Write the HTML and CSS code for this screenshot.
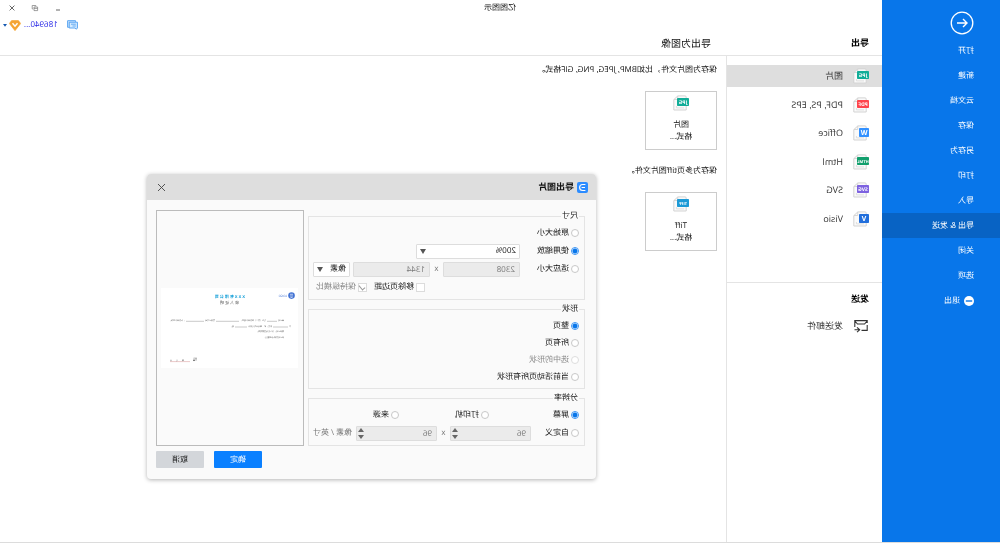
FILE: index.html
```html
<!DOCTYPE html>
<html lang="zh-CN">
<head>
<meta charset="utf-8">
<title>亿图图示</title>
<link rel="stylesheet" href="styles.css">
</head>
<body>
<svg class="defs" aria-hidden="true">
  <symbol id="sheet" viewBox="0 0 16 16">
    <path d="M4 .9H11.2L15.2 4.6V15H2.8V2.1Q2.8 .9 4 .9Z" fill="#fafafa" stroke="#d3d3d3"/>
    <path d="M11.3 1V4.5H15.1" fill="none" stroke="#d3d3d3" stroke-width=".9"/>
    <path d="M5 12.9H12.6V11" fill="none" stroke="#dedede"/>
  </symbol>
</svg>
<div class="page">
  <nav class="sidebar" aria-label="文件">
    <button class="back" aria-label="返回"><svg viewBox="0 0 24 24"><circle cx="12" cy="12" r="10.8" fill="none" stroke="#fff" stroke-width="1.3"/><path d="M17 12H7.5M11 8L7 12L11 16" fill="none" stroke="#fff" stroke-width="1.4"/></svg></button>
    <a href="#">打开</a>
    <a href="#">新建</a>
    <a href="#">云文档</a>
    <a href="#">保存</a>
    <a href="#">另存为</a>
    <a href="#">打印</a>
    <a href="#">导入</a>
    <a href="#" class="current">导出 &amp; 发送</a>
    <a href="#">关闭</a>
    <a href="#">选项</a>
    <a href="#"><svg class="exit" viewBox="0 0 10 10"><circle cx="5" cy="5" r="5" fill="#fff"/><path d="M1.8 5H8.2" stroke="#0876ea" stroke-width="1.4"/></svg>退出</a>
  </nav>

  <div class="main">
    <header class="titlebar">
      <span class="app-name">亿图图示</span>
      <div class="controls">
        <button aria-label="最小化"><svg viewBox="0 0 8 8"><path d="M2 6H6" stroke="#666" fill="none"/></svg></button>
        <button aria-label="还原"><svg viewBox="0 0 8 8"><path d="M3.2 2.5V1.5H6.8V4.9H5.9M1.4 3H5V6.6H1.4ZM1.4 4.4H5" stroke="#777" stroke-width=".7" fill="none"/></svg></button>
        <button aria-label="关闭"><svg viewBox="0 0 8 8"><path d="M1.6 1.6L6.4 6.4M6.4 1.6L1.6 6.4" stroke="#555" stroke-width=".9" fill="none"/></svg></button>
      </div>
    </header>
    <div class="userbar">
      <button aria-label="消息"><svg class="chat" viewBox="0 0 11 10"><path d="M2.5 1.8V.7H10.4V7.3H9.2M.6 2.2H8.8V8H3L1.6 9.2L.6 8Z" fill="#d5ebff" stroke="#4a9cf0" stroke-width=".9"/><path d="M2.2 4.2H7M2.2 6H5.5" stroke="#4a9cf0" stroke-width=".8"/></svg></button>
      <a href="#" class="account">186940...</a>
      <svg class="gem" viewBox="0 0 12 11"><path d="M2.6 .5H9.4L11.7 3.5L6 10.7L.3 3.5Z" fill="#f5a432" stroke="#f5a432" stroke-width=".6" stroke-linejoin="round"/><path d="M3.5 3.3L6 6.2L8.5 3.3" fill="none" stroke="#fff" stroke-width="1.4"/></svg>
      <svg class="caret" viewBox="0 0 4 3"><path d="M0 0H4L2 2.8Z" fill="#1558b0"/></svg>
    </div>
    <div class="headings">
      <h1>导出</h1>
      <h2>导出为图像</h2>
    </div>

    <div class="columns">
      <div class="types">
        <section class="export">
          <a href="#" class="type selected"><svg viewBox="0 0 16 16"><use href="#sheet"/><rect y="3" width="12" height="8" rx=".8" fill="#12ad98"/><text x="6" y="8.8">JPG</text></svg>图片</a>
          <a href="#" class="type"><svg viewBox="0 0 16 16"><use href="#sheet"/><rect y="3" width="12" height="8" rx=".8" fill="#ff444c"/><text x="6" y="8.8">PDF</text></svg>PDF, PS, EPS</a>
          <a href="#" class="type"><svg viewBox="0 0 16 16"><use href="#sheet"/><rect y="3" width="10" height="9" rx=".8" fill="#3391ff"/><text class="letter" x="5" y="9.6">W</text></svg>Office</a>
          <a href="#" class="type"><svg viewBox="0 0 16 16"><use href="#sheet"/><rect y="3" width="12" height="8" rx=".8" fill="#129f6d"/><text class="long" x="6" y="8.6">HTML</text></svg>Html</a>
          <a href="#" class="type"><svg viewBox="0 0 16 16"><use href="#sheet"/><rect y="3" width="12" height="8" rx=".8" fill="#7d62e0"/><text x="6" y="8.8">SVG</text></svg>SVG</a>
          <a href="#" class="type"><svg viewBox="0 0 16 16"><use href="#sheet"/><rect y="3" width="10" height="9" rx=".8" fill="#226fdc"/><text class="letter" x="5" y="9.6">V</text></svg>Visio</a>
        </section>
        <section class="send">
          <h2>发送</h2>
          <a href="#" class="type"><svg viewBox="0 0 16 16"><path d="M1.8 7V12.4H7.5M1.8 5V2.6H14.2V9M1.8 3L4.5 6H11.5L14.2 3M9 11.8H14.5M12 9.3L9.3 11.8L12 14.2" fill="none" stroke="#333" stroke-width="1.1"/></svg>发送邮件</a>
        </section>
      </div>

      <main class="content">
        <p>保存为图片文件，比如BMP, JPEG, PNG, GIF格式。</p>
        <button class="card"><svg viewBox="0 0 16 16"><use href="#sheet"/><rect y="3" width="12" height="8" rx=".8" fill="#12ad98"/><text x="6" y="8.8">JPG</text></svg><span>图片<br>格式...</span></button>
        <p>保存为多页tiff图片文件。</p>
        <button class="card"><svg viewBox="0 0 16 16"><use href="#sheet"/><rect y="3" width="12" height="8" rx=".8" fill="#1d9ad6"/><text class="long" x="6" y="8.6">TIFF</text></svg><span>Tiff<br>格式...</span></button>
      </main>
    </div>
  </div>

  <form class="dialog" role="dialog" aria-labelledby="dialog-title">
    <div class="dialog-head">
      <svg class="logo" viewBox="0 0 11 11"><rect width="11" height="11" rx="2" fill="#2c8cff"/><path d="M2.6 2.5H5.4A3 3 0 0 1 5.4 8.5H2.6M3 5.5H6.4" fill="none" stroke="#fff" stroke-width="1.1"/></svg>
      <h2 id="dialog-title">导出图片</h2>
      <button type="button" class="close" aria-label="关闭"><svg viewBox="0 0 9 9"><path d="M1 1L8 8M8 1L1 8" stroke="#444" stroke-width=".9"/></svg></button>
    </div>
    <div class="dialog-body">
      <div class="settings">
        <fieldset>
          <legend>尺寸</legend>
          <div class="rows">
            <div class="row"><label class="opt"><input type="radio" name="size">原始大小</label></div>
            <div class="row"><label class="opt size-opt"><input type="radio" name="size" checked>使用缩放</label>
              <span class="pick zoom"><select aria-label="缩放"><option>200%</option></select></span></div>
            <div class="row"><label class="opt size-opt"><input type="radio" name="size">适应大小</label>
              <input class="box" type="text" value="2308" aria-label="宽度" disabled><span class="times">x</span><input class="box" type="text" value="1344" aria-label="高度" disabled>
              <span class="pick unit"><select aria-label="单位"><option>像素</option></select></span></div>
            <div class="row checks"><label class="opt"><input type="checkbox">移除页边距</label><label class="opt off"><input type="checkbox" checked disabled>保持纵横比</label></div>
          </div>
        </fieldset>
        <fieldset class="shape">
          <legend>形状</legend>
          <div class="rows">
            <div class="row"><label class="opt"><input type="radio" name="shape" checked>整页</label></div>
            <div class="row"><label class="opt"><input type="radio" name="shape">所有页</label></div>
            <div class="row"><label class="opt off"><input type="radio" name="shape" disabled>选中的形状</label></div>
            <div class="row"><label class="opt"><input type="radio" name="shape">当前活动页所有形状</label></div>
          </div>
        </fieldset>
        <fieldset>
          <legend>分辨率</legend>
          <div class="rows">
            <div class="row"><label class="opt third"><input type="radio" name="dpi" checked>屏幕</label><label class="opt third"><input type="radio" name="dpi">打印机</label><label class="opt"><input type="radio" name="dpi">来源</label></div>
            <div class="row"><label class="opt dpi-opt"><input type="radio" name="dpi">自定义</label>
              <span class="spin"><input class="box" type="text" value="96" aria-label="水平分辨率" disabled></span><span class="times">x</span><span class="spin"><input class="box" type="text" value="96" aria-label="垂直分辨率" disabled></span><span class="per">像素 / 英寸</span></div>
          </div>
        </fieldset>
      </div>
      <div class="side">
        <div class="preview">
          <svg viewBox="0 0 137 80" role="img" aria-label="预览">
            <rect width="137" height="80" fill="#fff"/>
            <circle cx="6.5" cy="7.6" r="3.3" fill="#4474d4"/><path d="M5 6.3H8M5 8H8M5.5 9.5H7.5" stroke="#fff" stroke-width=".6"/>
            <text class="brand" x="11" y="9">LOGO</text>
            <text class="company" x="53" y="9.5">X X X 有 限 公 司</text>
            <text class="subject" x="59" y="15.5">收 入 证 明</text>
            <text x="14" y="33">兹证明</text><text x="32" y="33">先生（女士）系我单位员工，</text><text x="83" y="33">身份证号码</text><text x="113" y="33">，在我单位工作。</text>
            <path d="M21 33.3H31M59 33.3H82M94 33.3H112" stroke="#777" stroke-width=".4"/>
            <text x="7" y="38.7">任</text><text x="26" y="38.7">职务，近一年内平均月收入</text><text x="64" y="38.7">元。</text>
            <path d="M10 39H25M51 39H63" stroke="#777" stroke-width=".4"/>
            <text x="14" y="44.4">特此证明，以上情况真实有效。</text>
            <text x="14" y="50">此证明仅限 办理使用。</text>
            <text x="101" y="70.5">单位</text><text x="101" y="73.2">盖章</text>
            <path d="M108 73.6H128" stroke="#c77" stroke-width=".4"/><text x="114" y="73.2">年</text><text x="120" y="73.2">月</text><text x="126" y="73.2">日</text>
          </svg>
        </div>
        <div class="actions"><button type="submit" class="primary">确定</button><button type="button">取消</button></div>
      </div>
    </div>
  </form>
</div>
</body>
</html>
```
FILE: styles.css
```css
* { box-sizing: border-box; }
body {
  margin: 0;
  background: #fff;
  color: #111;
  font: 8px/12px "Open Sans", "Noto Sans CJK SC", sans-serif;
  text-rendering: geometricPrecision;
}
h1, h2, p { margin: 0; font-size: inherit; }
a { color: inherit; text-decoration: none; }
button { padding: 0; border: 0; background: none; color: inherit; font: inherit; }
button, input, select { text-rendering: inherit; }
svg { display: block; flex: none; }
.defs { position: absolute; width: 0; height: 0; }

/* The whole window is shown mirrored. */
.page {
  position: relative;
  display: flex;
  min-height: 100vh;
  border-bottom: 1px solid #dcdcdc;
  transform: scaleX(-1);
}

.sidebar { width: 118px; flex: none; background: #0876ea; color: #fff; padding-top: 11px; }
.sidebar a { display: flex; align-items: center; gap: 4px; height: 25px; padding-left: 26px; }
.sidebar .current { background: #0863c4; }
.back { display: block; margin: 0 0 3px 26px; }
.back svg { width: 24px; height: 24px; }
.exit { width: 10px; height: 10px; }

.main { flex: 1; min-width: 0; display: flex; flex-direction: column; }
.titlebar { display: grid; grid-template-columns: 1fr auto 1fr 118px; align-items: center; height: 16px; }
.app-name { grid-column: 2; }
.controls { grid-column: 3 / 5; display: flex; justify-content: flex-end; gap: 15px; padding-right: 8px; }
.controls svg { width: 8px; height: 8px; }
.userbar { display: flex; justify-content: flex-end; align-items: center; height: 18px; padding-right: 3px; }
.chat { width: 11px; height: 10px; }
.account { margin: 0 3px 0 9px; color: #2323e6; }
.gem { width: 12px; height: 11px; margin-right: 2px; }
.caret { width: 4px; height: 3px; }
.headings { display: flex; align-items: center; height: 22px; padding: 0 0 4px 13px; border-bottom: 1px solid #e4e4e4; }
.headings h1 { width: 158px; font-size: 9px; color: #000; }
.headings h2 { font-size: 10px; font-weight: 400; }

.columns { flex: 1; display: flex; }
.types { width: 156px; flex: none; border-right: 1px solid #e4e4e4; font-size: 9px; color: #333; }
.export {
  display: flex;
  flex-direction: column;
  justify-content: space-between;
  height: 227px;
  padding: 9px 0 52px;
  border-bottom: 1px solid #e4e4e4;
}
.type { display: flex; align-items: center; gap: 10px; height: 22px; padding-left: 13px; }
.type svg, .card svg { width: 16px; height: 16px; }
.type text, .card text { fill: #fff; font-size: 5px; font-weight: 700; text-anchor: middle; }
.type .letter { font-size: 7px; }
.type .long, .card .long { font-size: 4px; }
.selected { background: #dedede; }
.send { padding-top: 10px; }
.send h2 { margin: 0 0 10px 13px; color: #000; }

.content { flex: 1; padding: 8px 9px; }
.card {
  display: flex;
  flex-direction: column;
  align-items: center;
  gap: 8px;
  width: 72px;
  height: 59px;
  margin: 15px 0;
  padding-top: 3px;
  border: 1px solid #ccc;
}

.dialog {
  position: absolute;
  left: 404px;
  top: 174px;
  width: 449px;
  border-radius: 4px;
  background: #fafafa;
  box-shadow: 0 1px 4px rgba(0, 0, 0, .3);
}
.dialog-head { display: flex; align-items: center; gap: 3px; height: 26px; padding: 0 10px 0 8px; background: #dedede; border-radius: 4px 4px 0 0; }
.logo { width: 11px; height: 11px; }
.dialog-head h2 { font-size: 9px; }
.close { margin-left: auto; }
.close svg { width: 9px; height: 9px; }
.dialog-body { display: flex; gap: 4px; padding: 10px 9px 11px 11px; }
.settings { flex: 1; display: flex; flex-direction: column; gap: 4px; padding-top: 1px; }
fieldset { min-width: 0; margin: 0; padding: 4px 4px 4px 5px; border: 1px solid #e4e4e4; }
legend { padding: 0 1px; line-height: 10px; }
.rows { display: grid; gap: 2px; }
.row { display: flex; align-items: center; height: 16px; }
.shape { padding: 3px 4px 3px 5px; }
.shape .rows { gap: 0; }
.shape .row { height: 17px; }
.opt { display: flex; align-items: center; gap: 2px; white-space: nowrap; }
.off { color: #888; }
.size-opt { width: 59px; }
.dpi-opt { width: 48px; }
.third { width: 90px; }

input[type="radio"], input[type="checkbox"] { appearance: none; flex: none; margin: 0; background: #fff; border: 1px solid #c8c8c8; }
input[type="radio"] { width: 8px; height: 8px; border-radius: 50%; }
input[type="radio"]:checked { border-color: #3a94f5; background: radial-gradient(circle, #0876ea 2px, #fff 3px); }
input[type="radio"]:disabled { border-color: #ddd; }
input[type="checkbox"] { width: 9px; height: 9px; border-color: #dcdcdc; }
input[type="checkbox"]:checked { display: grid; place-items: center; }
input[type="checkbox"]:checked::before { content: ""; width: 3px; height: 5px; margin-bottom: 1px; border: solid #999; border-width: 0 1px 1px 0; rotate: 40deg; }
.checks { gap: 7px; padding-left: 154px; }

.box { width: 77px; height: 15px; padding: 0 4px; border: 1px solid #ddd; border-radius: 1px; background: #ebebeb; color: #777; font: inherit; }
.times { width: 13px; text-align: center; color: #777; }
.pick { position: relative; height: 15px; }
.pick select { appearance: none; display: block; width: 100%; height: 15px; padding: 0 3px; border: 1px solid #ddd; border-radius: 1px; background: #fff; color: #111; font: inherit; }
.pick::after { content: ""; position: absolute; right: 4px; top: 5px; border: solid transparent; border-width: 5px 3px 0; border-top-color: #555; }
.zoom { width: 104px; }
.unit { width: 37px; margin-left: 3px; }
.spin { position: relative; }
.spin .box { display: block; width: 81px; }
.spin::before, .spin::after { content: ""; position: absolute; right: 2px; border: solid transparent; }
.spin::before { top: 2px; border-width: 0 3px 4px; border-bottom-color: #666; }
.spin::after { bottom: 2px; border-width: 4px 3px 0; border-top-color: #666; }
.per { margin-left: 4px; color: #777; white-space: nowrap; }

.side { width: 148px; flex: none; }
.preview { display: grid; place-items: center; height: 236px; border: 1px solid #bbb; }
.preview svg { width: 137px; height: 80px; }
.preview text { fill: #555; font-size: 2px; }
.preview .brand { fill: #4474d4; font-size: 3px; }
.preview .company { fill: #149fd8; font-size: 4px; font-weight: 700; }
.preview .subject { fill: #444; font-size: 4px; }
.actions { display: flex; justify-content: flex-end; gap: 10px; padding-top: 5px; }
.actions button { width: 48px; height: 17px; border-radius: 1px; background: #d3d6da; }
.actions .primary { background: #0a80ff; color: #fff; }
```
